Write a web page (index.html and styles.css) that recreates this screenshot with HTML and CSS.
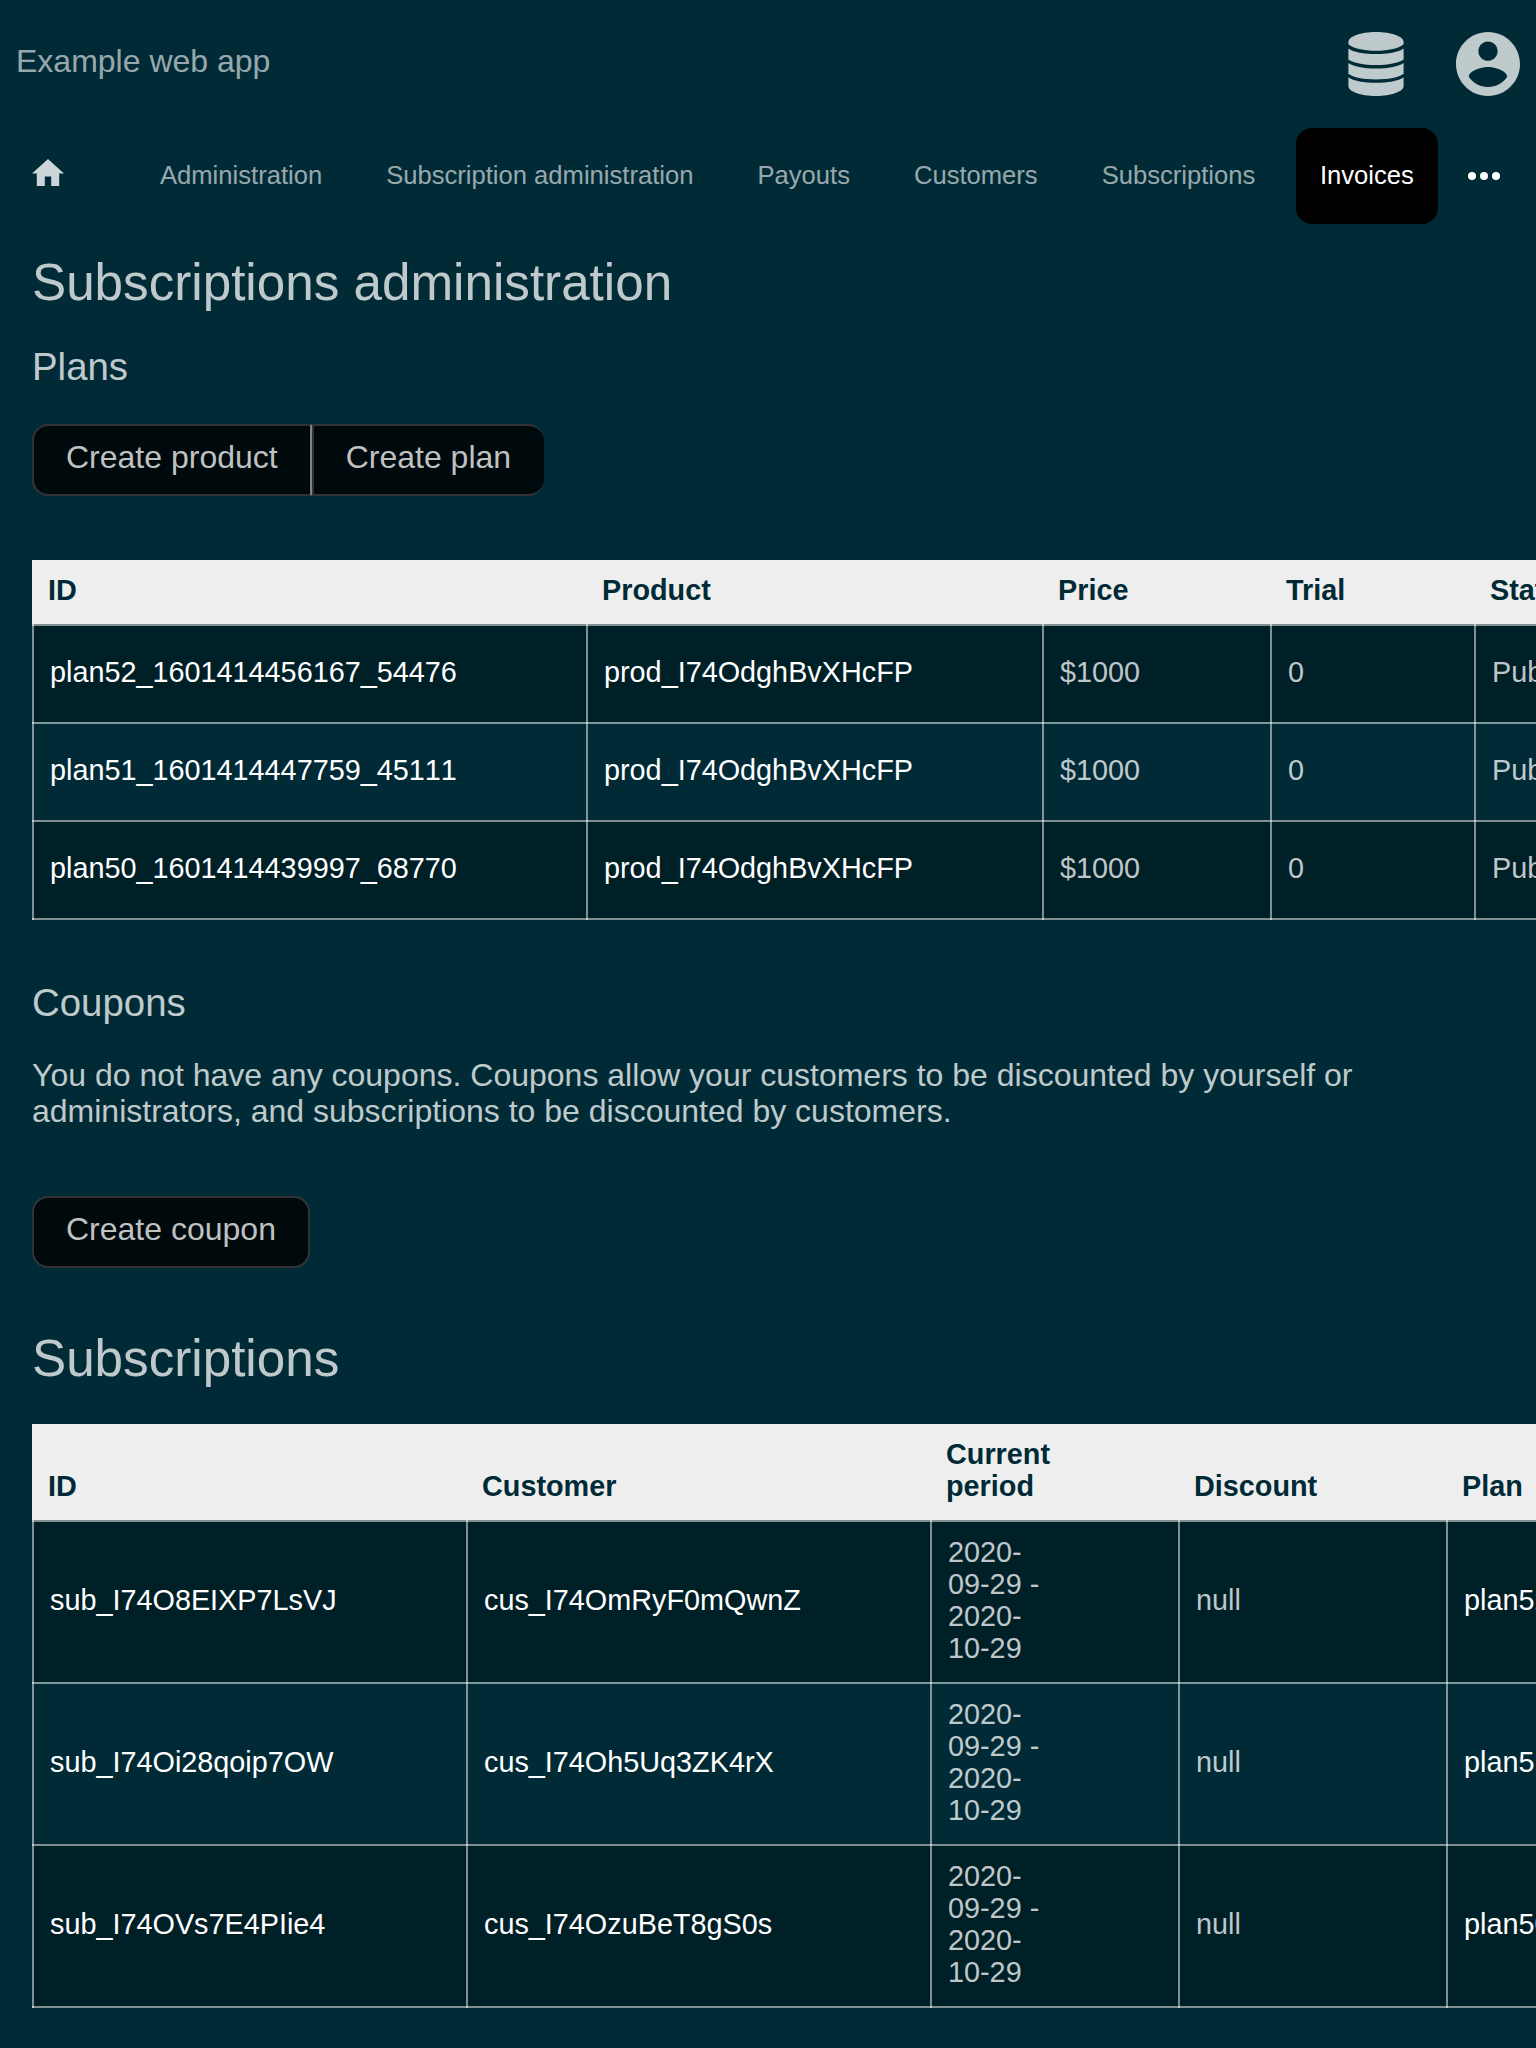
FILE: index.html
```html
<!DOCTYPE html>
<html lang="en">
<head>
<meta charset="utf-8">
<title>Subscriptions administration</title>
<link rel="stylesheet" href="styles.css">
</head>
<body>
<header class="header">
  <a class="brand">Example web app</a>
  <div class="header-icons">
    <svg class="icon-db" viewBox="0 0 56 64">
      <path d="M.4 10C.4 4.500 12.500 0 28 0s27.600 4.500 27.600 10v2.300C51 16.500 40 18.800 28 18.800S5 16.500.4 12.300z"/>
      <path d="M.4 16.400C5 20 16 22 28 22s23-2 27.600-5.600V27.500C51 31 40 33 28 33S5 31 .4 27.500z"/>
      <path d="M.4 31C5 34.500 16 36.500 28 36.500S51 34.500 55.600 31v10.800C51 45.500 40 47.500 28 47.500S5 45.500 .4 41.800z"/>
      <path d="M.4 45.200C5 48.800 16 50.800 28 50.800s23-2 27.600-5.600V54C55.600 59.500 43.500 64 28 64S.4 59.500.4 54z"/>
    </svg>
    <svg class="icon-user" viewBox="2 2 20 20"><path d="M12 2C6.480 2 2 6.480 2 12s4.480 10 10 10 10-4.480 10-10S17.520 2 12 2zm0 3c1.660 0 3 1.340 3 3s-1.340 3-3 3-3-1.340-3-3 1.340-3 3-3zm0 14.200c-2.500 0-4.710-1.280-6-3.220.030-1.990 4-3.080 6-3.080 1.990 0 5.970 1.090 6 3.080-1.290 1.940-3.500 3.220-6 3.220z"/></svg>
  </div>
</header>
<nav class="nav">
  <a class="home"><svg viewBox="2 3 20 17"><path d="M10 20v-6h4v6h5v-8h3L12 3 2 12h3v8z"/></svg></a>
  <a class="nav-link">Administration</a>
  <a class="nav-link">Subscription administration</a>
  <a class="nav-link">Payouts</a>
  <a class="nav-link">Customers</a>
  <a class="nav-link">Subscriptions</a>
  <a class="nav-link active">Invoices</a>
  <a class="more"><svg viewBox="0 0 32 8"><circle cx="4" cy="4" r="4"/><circle cx="16" cy="4" r="4"/><circle cx="28" cy="4" r="4"/></svg></a>
</nav>
<main class="content">
  <h1 class="page-title">Subscriptions administration</h1>
  <h2 class="section-title">Plans</h2>
  <div class="buttons plan-buttons"><a class="button">Create product</a><a class="button">Create plan</a></div>
  <table class="table plans">
    <colgroup><col class="p-id"><col class="p-product"><col class="p-price"><col class="p-trial"><col class="p-status"></colgroup>
    <thead><tr><th>ID</th><th>Product</th><th>Price</th><th>Trial</th><th>Status</th></tr></thead>
    <tbody>
      <tr><td><a>plan52_1601414456167_54476</a></td><td><a>prod_I74OdghBvXHcFP</a></td><td>$1000</td><td>0</td><td>Published</td></tr>
      <tr><td><a>plan51_1601414447759_45111</a></td><td><a>prod_I74OdghBvXHcFP</a></td><td>$1000</td><td>0</td><td>Published</td></tr>
      <tr><td><a>plan50_1601414439997_68770</a></td><td><a>prod_I74OdghBvXHcFP</a></td><td>$1000</td><td>0</td><td>Published</td></tr>
    </tbody>
  </table>
  <h2 class="section-title coupons-title">Coupons</h2>
  <p class="note">You do not have any coupons. Coupons allow your customers to be discounted by yourself or administrators, and subscriptions to be discounted by customers.</p>
  <div class="buttons coupon-buttons"><a class="button">Create coupon</a></div>
  <h1 class="page-title subscriptions-title">Subscriptions</h1>
  <table class="table subscriptions">
    <colgroup><col class="s-id"><col class="s-customer"><col class="s-period"><col class="s-discount"><col class="s-plan"></colgroup>
    <thead><tr><th>ID</th><th>Customer</th><th>Current<br>period</th><th>Discount</th><th>Plan</th></tr></thead>
    <tbody>
      <tr><td><a>sub_I74O8EIXP7LsVJ</a></td><td><a>cus_I74OmRyF0mQwnZ</a></td><td>2020-<br>09-29 -<br>2020-<br>10-29</td><td>null</td><td><a>plan52_1601414456167_54476</a></td></tr>
      <tr><td><a>sub_I74Oi28qoip7OW</a></td><td><a>cus_I74Oh5Uq3ZK4rX</a></td><td>2020-<br>09-29 -<br>2020-<br>10-29</td><td>null</td><td><a>plan51_1601414447759_45111</a></td></tr>
      <tr><td><a>sub_I74OVs7E4PIie4</a></td><td><a>cus_I74OzuBeT8gS0s</a></td><td>2020-<br>09-29 -<br>2020-<br>10-29</td><td>null</td><td><a>plan50_1601414439997_68770</a></td></tr>
    </tbody>
  </table>
</main>
</body>
</html>
```
FILE: styles.css
```css
* { box-sizing: border-box; }

html { overflow: hidden; }

body {
  margin: 0;
  height: 2048px;
  overflow: hidden;
  background: #002b36;
  color: rgba(255, 255, 255, 0.75);
  font: 32px/36px "Liberation Sans", Arial, sans-serif;
}

.header {
  display: flex;
  justify-content: space-between;
  align-items: center;
  height: 128px;
  padding: 0 16px;
}

.brand {
  padding-bottom: 6px;
  color: rgba(255, 255, 255, 0.6);
}

.header-icons {
  display: flex;
  gap: 52px;
  fill: #bfcacd;
}

.icon-db { width: 56px; height: 64px; }
.icon-user { width: 64px; height: 64px; }

.nav {
  display: flex;
  align-items: center;
  gap: 16px;
  height: 96px;
  padding-left: 32px;
  font-size: 25.6px;
  line-height: 30px;
}

.home {
  width: 88px;
  height: 28px;
  margin-bottom: 7px;
}

.home svg {
  display: block;
  width: 32px;
  height: 27.2px;
  fill: #ccd5d7;
}

.nav-link {
  display: flex;
  align-items: center;
  height: 96px;
  padding: 0 24px 2px;
  border-radius: 16px;
  color: rgba(255, 255, 255, 0.6);
  white-space: nowrap;
}

.nav-link.active {
  margin-left: 0.6px;
  background: #000;
  color: #fff;
}

.more { margin-left: 14px; }

.more svg {
  display: block;
  width: 32px;
  height: 8px;
  fill: #fff;
}

.content { padding: 29px 32px 0; }

.page-title {
  margin: 0;
  font-size: 51.2px;
  font-weight: 400;
  line-height: 60px;
}

.section-title {
  margin: 32px 0 0;
  font-size: 38.4px;
  font-weight: 400;
  line-height: 44px;
}

.section-title.coupons-title { margin-top: 61px; }

.note {
  width: 1400px;
  margin: 32px 0 0;
}

.buttons { display: flex; }
.plan-buttons { margin: 35px 0 64px; }
.coupon-buttons { margin: 67px 0 61px; }

.button {
  height: 72px;
  padding: 13px 32px 0;
  border: 2px solid #333;
  background: #00090b;
  background-clip: padding-box;
  color: #bfc1c2;
}

.button:first-child { border-radius: 16px 0 0 16px; }
.button:last-child { border-radius: 0 16px 16px 0; }
.button:only-child { border-radius: 16px; }
.button:not(:last-child) { border-right-color: #808485; }
.button:last-child:not(:only-child) { padding-right: 33px; border-right: 0; }

.subscriptions-title { margin-bottom: 35px; }

.table {
  --line: linear-gradient(rgba(255, 255, 255, 0.5), rgba(255, 255, 255, 0.5));
  border-spacing: 0;
  table-layout: fixed;
  font-size: 28.8px;
  line-height: 32px;
}

.plans { width: 1700px; }
.subscriptions { width: 1900px; }

.p-id { width: 554px; }
.p-product { width: 456px; }
.p-price { width: 228px; }
.p-trial { width: 204px; }
.s-id { width: 434px; }
.s-customer { width: 464px; }
.s-period { width: 248px; }
.s-discount { width: 268px; }

.table th {
  padding: 14px 16px 18px;
  background: #eee;
  color: #002b36;
  text-align: left;
  vertical-align: bottom;
}

/* Translucent rules overlap where they cross */
.table td {
  padding: 30px 16px 34px 18px;
  border-top: 2px solid transparent;
  background-image: var(--line), var(--line);
  background-size: 2px 100%, 100% 2px;
  background-repeat: no-repeat;
  background-origin: border-box;
  white-space: nowrap;
}

.plans td { font-kerning: none; }

.subscriptions td { padding-top: 14px; padding-bottom: 18px; }

.table tbody tr:nth-child(odd) td { background-color: #002028; }

.table tbody tr:last-child td {
  border-bottom: 2px solid transparent;
  background-image: var(--line), var(--line), var(--line);
  background-size: 2px 100%, 100% 2px, 100% 2px;
  background-position: 0 0, 0 0, 0 100%;
}

.table a { color: #fff; }
```
